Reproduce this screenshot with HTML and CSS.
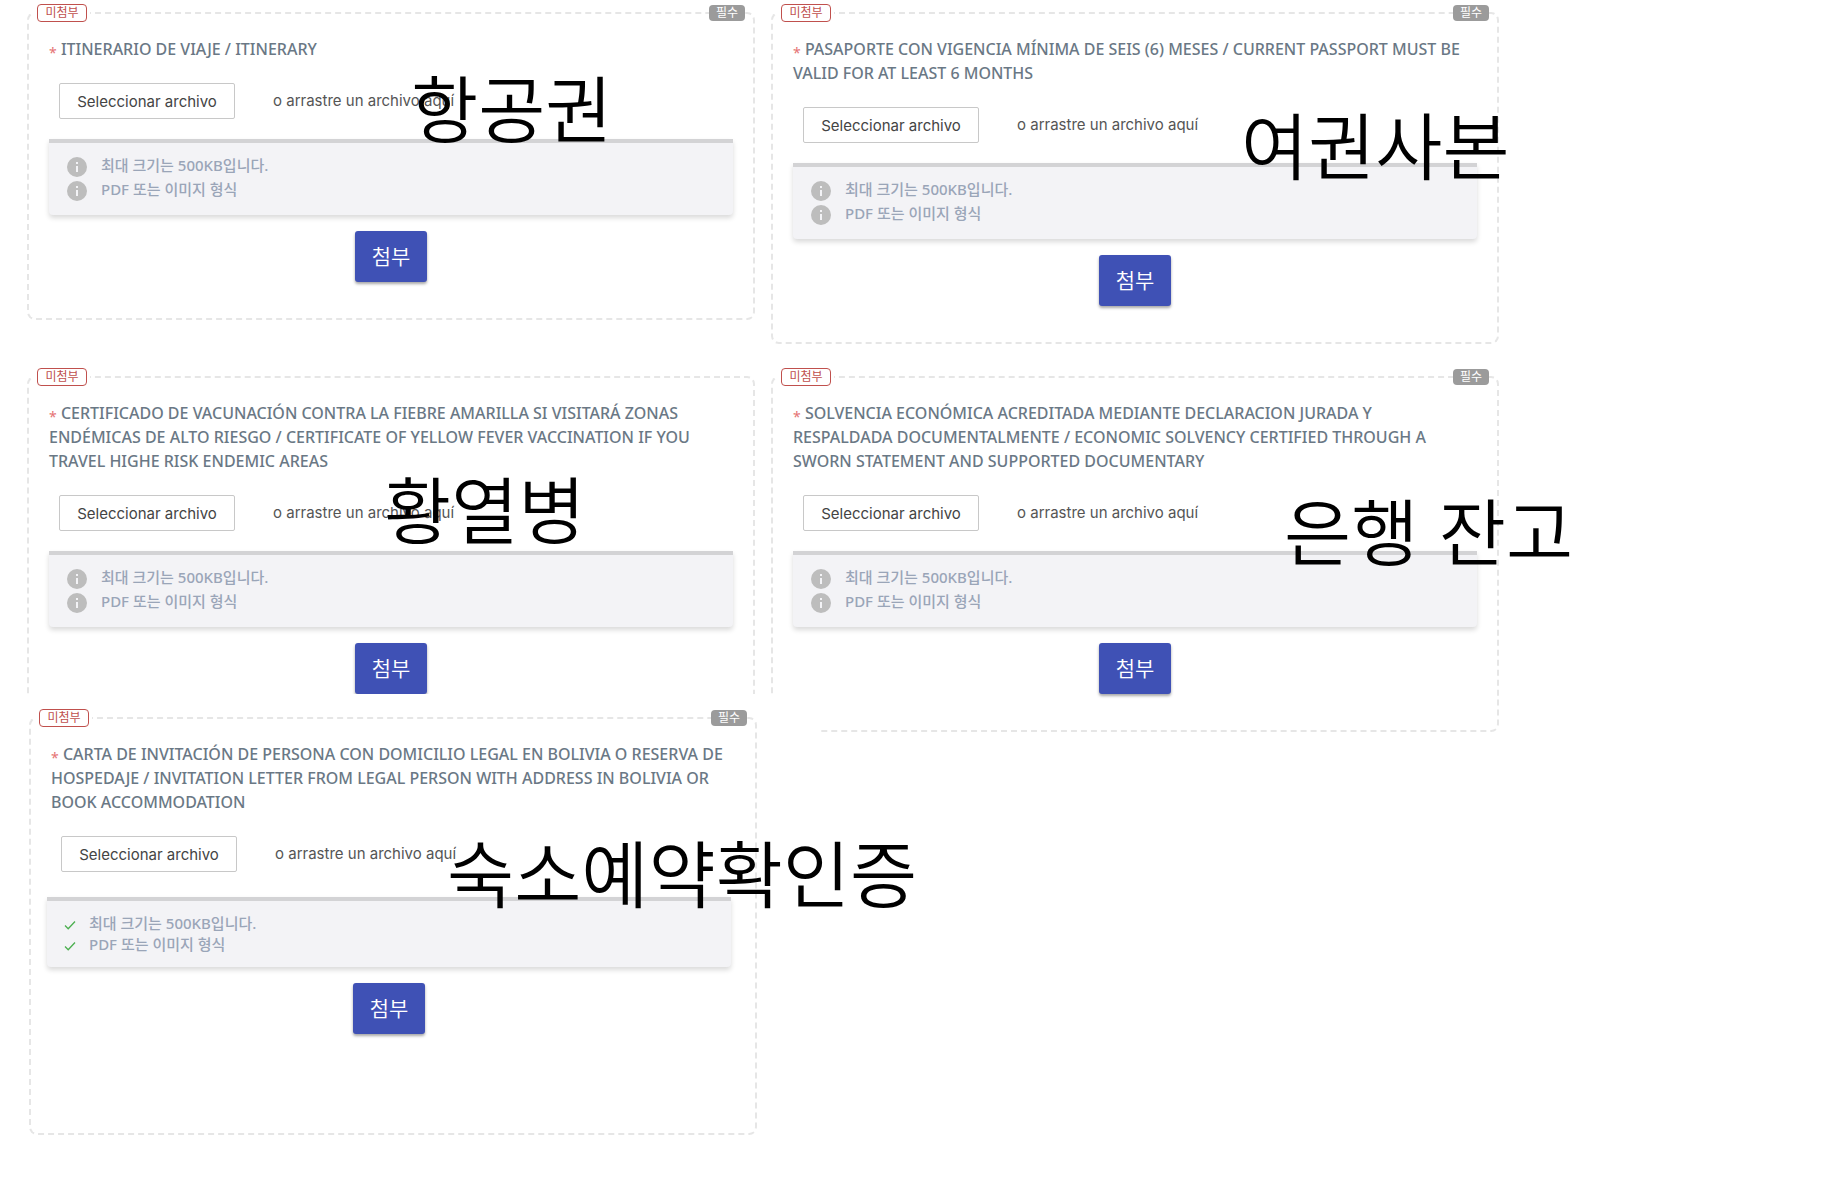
FILE: index.html
```html
<!DOCTYPE html>
<html lang="ko">
<head>
<meta charset="utf-8">
<meta name="viewport" content="width=device-width, initial-scale=1">
<title>첨부 서류</title>
<link rel="stylesheet" href="styles.css">
</head>
<body>
<svg class="sprite" aria-hidden="true">
  <symbol id="info" viewBox="0 0 24 24"><path d="M12 0a12 12 0 1 0 0 24 12 12 0 0 0 0-24zm1.200 18h-2.400v-7.200h2.400zm0-9.600h-2.400V6h2.400z"/></symbol>
  <symbol id="check" viewBox="0 0 12 12"><path d="M1 6.500 4.200 9.700 11 2.500" fill="none" stroke="currentColor" stroke-width="1.300"/></symbol>
</svg>
<main class="page">
  <div class="grid">
    <section class="card">
      <span class="badge badge-pending">미첨부</span>
      <span class="badge badge-required">필수</span>
      <h2 class="title"><span class="star">*</span> ITINERARIO DE VIAJE / ITINERARY</h2>
      <div class="picker"><button type="button" class="select">Seleccionar archivo</button><span class="hint">o arrastre un archivo aquí</span></div>
      <ul class="rules">
        <li><svg class="icon"><use href="#info"/></svg>최대 크기는 500KB입니다.</li>
        <li><svg class="icon"><use href="#info"/></svg>PDF 또는 이미지 형식</li>
      </ul>
      <button type="button" class="attach">첨부</button>
      <span class="note note-flight">항공권</span>
    </section>

    <section class="card">
      <span class="badge badge-pending">미첨부</span>
      <span class="badge badge-required">필수</span>
      <h2 class="title"><span class="star">*</span> PASAPORTE CON VIGENCIA MÍNIMA DE SEIS (6) MESES / CURRENT PASSPORT MUST BE<br>VALID FOR AT LEAST 6 MONTHS</h2>
      <div class="picker"><button type="button" class="select">Seleccionar archivo</button><span class="hint">o arrastre un archivo aquí</span></div>
      <ul class="rules">
        <li><svg class="icon"><use href="#info"/></svg>최대 크기는 500KB입니다.</li>
        <li><svg class="icon"><use href="#info"/></svg>PDF 또는 이미지 형식</li>
      </ul>
      <button type="button" class="attach">첨부</button>
      <span class="note note-passport">여권사본</span>
    </section>

    <section class="card">
      <span class="badge badge-pending">미첨부</span>
      <h2 class="title"><span class="star">*</span> CERTIFICADO DE VACUNACIÓN CONTRA LA FIEBRE AMARILLA SI VISITARÁ ZONAS<br>ENDÉMICAS DE ALTO RIESGO / CERTIFICATE OF YELLOW FEVER VACCINATION IF YOU<br>TRAVEL HIGHE RISK ENDEMIC AREAS</h2>
      <div class="picker"><button type="button" class="select">Seleccionar archivo</button><span class="hint">o arrastre un archivo aquí</span></div>
      <ul class="rules">
        <li><svg class="icon"><use href="#info"/></svg>최대 크기는 500KB입니다.</li>
        <li><svg class="icon"><use href="#info"/></svg>PDF 또는 이미지 형식</li>
      </ul>
      <button type="button" class="attach">첨부</button>
      <span class="note note-fever">황열병</span>
    </section>

    <section class="card">
      <span class="badge badge-pending">미첨부</span>
      <span class="badge badge-required">필수</span>
      <h2 class="title"><span class="star">*</span> SOLVENCIA ECONÓMICA ACREDITADA MEDIANTE DECLARACION JURADA Y<br>RESPALDADA DOCUMENTALMENTE / ECONOMIC SOLVENCY CERTIFIED THROUGH A<br>SWORN STATEMENT AND SUPPORTED DOCUMENTARY</h2>
      <div class="picker"><button type="button" class="select">Seleccionar archivo</button><span class="hint">o arrastre un archivo aquí</span></div>
      <ul class="rules">
        <li><svg class="icon"><use href="#info"/></svg>최대 크기는 500KB입니다.</li>
        <li><svg class="icon"><use href="#info"/></svg>PDF 또는 이미지 형식</li>
      </ul>
      <button type="button" class="attach">첨부</button>
      <span class="note note-bank">은행 잔고</span>
    </section>
  </div>

  <div class="sheet">
    <section class="card card-lodging">
      <span class="badge badge-pending">미첨부</span>
      <span class="badge badge-required">필수</span>
      <h2 class="title"><span class="star">*</span> CARTA DE INVITACIÓN DE PERSONA CON DOMICILIO LEGAL EN BOLIVIA O RESERVA DE<br>HOSPEDAJE / INVITATION LETTER FROM LEGAL PERSON WITH ADDRESS IN BOLIVIA OR<br>BOOK ACCOMMODATION</h2>
      <div class="picker"><button type="button" class="select">Seleccionar archivo</button><span class="hint">o arrastre un archivo aquí</span></div>
      <div class="checked">
        <ul class="rules rules-ok">
          <li><svg class="icon"><use href="#check"/></svg>최대 크기는 500KB입니다.</li>
          <li><svg class="icon"><use href="#check"/></svg>PDF 또는 이미지 형식</li>
        </ul>
        <button type="button" class="attach">첨부</button>
      </div>
      <span class="note note-lodging">숙소예약확인증</span>
    </section>
  </div>
</main>
</body>
</html>
```

FILE: styles.css
```css
* {
  box-sizing: border-box;
}

body {
  margin: 0;
  background: #fff;
  color: #333;
  font-family: Inter, "Noto Sans CJK KR", sans-serif;
}

.sprite {
  display: none;
}

.page {
  padding: 12px 347px 60px 27px;
}

.grid {
  display: grid;
  grid-template-columns: 1fr 1fr;
  align-items: start;
  gap: 32px 16px;
}

.card {
  position: relative;
  display: flex;
  flex-direction: column;
  padding: 23px 20px 36px;
  border: 2px dashed #e6e6e6;
  border-radius: 8px;
}

/* the last form sits on its own sheet that overlaps the row above */
.sheet {
  position: relative;
  width: calc(50% + 84px);
  margin: -38px 0 0 -27px;
  padding: 23px 63px 0 29px;
  background: #fff;
}

.card-lodging {
  padding-bottom: 99px;
}

.badge {
  position: absolute;
  border-radius: 4px;
  font-size: 12px;
  text-align: center;
}

.badge-pending {
  top: -10px;
  left: 8px;
  width: 50px;
  border: 1px solid #c0504d;
  background: #fff;
  color: #c0504d;
  line-height: 16px;
  box-shadow: 0 0 0 3px #fff;
}

.badge-required {
  top: -9px;
  right: 8px;
  width: 36px;
  background: #9b9b9b;
  color: #fff;
  line-height: 16px;
}

.title {
  margin: 0 0 22px;
  color: #6a7885;
  font-family: "Noto Sans", sans-serif;
  font-size: 16px;
  font-weight: 500;
  line-height: 24px;
  white-space: nowrap;
}

.star {
  color: #e57373;
  font-size: 14px;
  font-weight: 400;
  line-height: 1;
  vertical-align: -3px;
}

.picker {
  display: flex;
  align-items: center;
  gap: 38px;
  padding-left: 10px;
  margin-bottom: 20px;
}

.select {
  width: 176px;
  height: 36px;
  padding: 0;
  border: 1px solid #c8c8c8;
  border-radius: 2px;
  background: #fff;
  color: #444;
  font: 15px Inter, sans-serif;
}

.hint {
  color: #555;
  font-size: 15px;
  line-height: 34px;
}

.rules {
  margin: 0 0 16px;
  padding: 10px 18px 14px;
  border-top: 4px solid #d3d3d5;
  border-radius: 0 0 4px 4px;
  background: #f3f3f6;
  box-shadow: 0 3px 5px rgba(0, 0, 0, 0.15);
  color: #9aa5b8;
  font-family: "Noto Sans", "Noto Sans CJK KR", sans-serif;
  font-size: 15px;
  font-weight: 500;
  line-height: 24px;
  list-style: none;
}

.rules li {
  display: flex;
  gap: 14px;
}

.icon {
  width: 20px;
  height: 20px;
  margin-top: 4px;
  fill: #bdbdbd;
}

.checked {
  display: flex;
  flex-direction: column;
  margin: 5px 4px 0 -4px;
}

.rules-ok {
  padding: 12px 17px;
  line-height: 21px;
}

.rules-ok li {
  gap: 13px;
}

.rules-ok .icon {
  width: 12px;
  height: 12px;
  margin-top: 6px;
  color: #4caf50;
}

.attach {
  align-self: center;
  width: 72px;
  height: 51px;
  padding: 0 0 4px;
  border: 0;
  border-radius: 3px;
  background: #3f51b5;
  box-shadow: 0 2px 3px rgba(0, 0, 0, 0.35);
  color: #fff;
  font: 21px "Noto Sans CJK KR", sans-serif;
  font-weight: 350;
}

.note {
  position: absolute;
  color: #000;
  font-family: "Noto Sans CJK KR", sans-serif;
  font-size: 73px;
  font-weight: 350;
  line-height: 72px;
  white-space: nowrap;
}

.note-flight {
  top: 55px;
  left: 382px;
}

.note-passport {
  top: 92px;
  left: 468px;
}

.note-fever {
  top: 92px;
  left: 355px;
}

.note-bank {
  top: 114px;
  left: 511px;
}

.note-lodging {
  top: 115px;
  left: 416px;
}
```
